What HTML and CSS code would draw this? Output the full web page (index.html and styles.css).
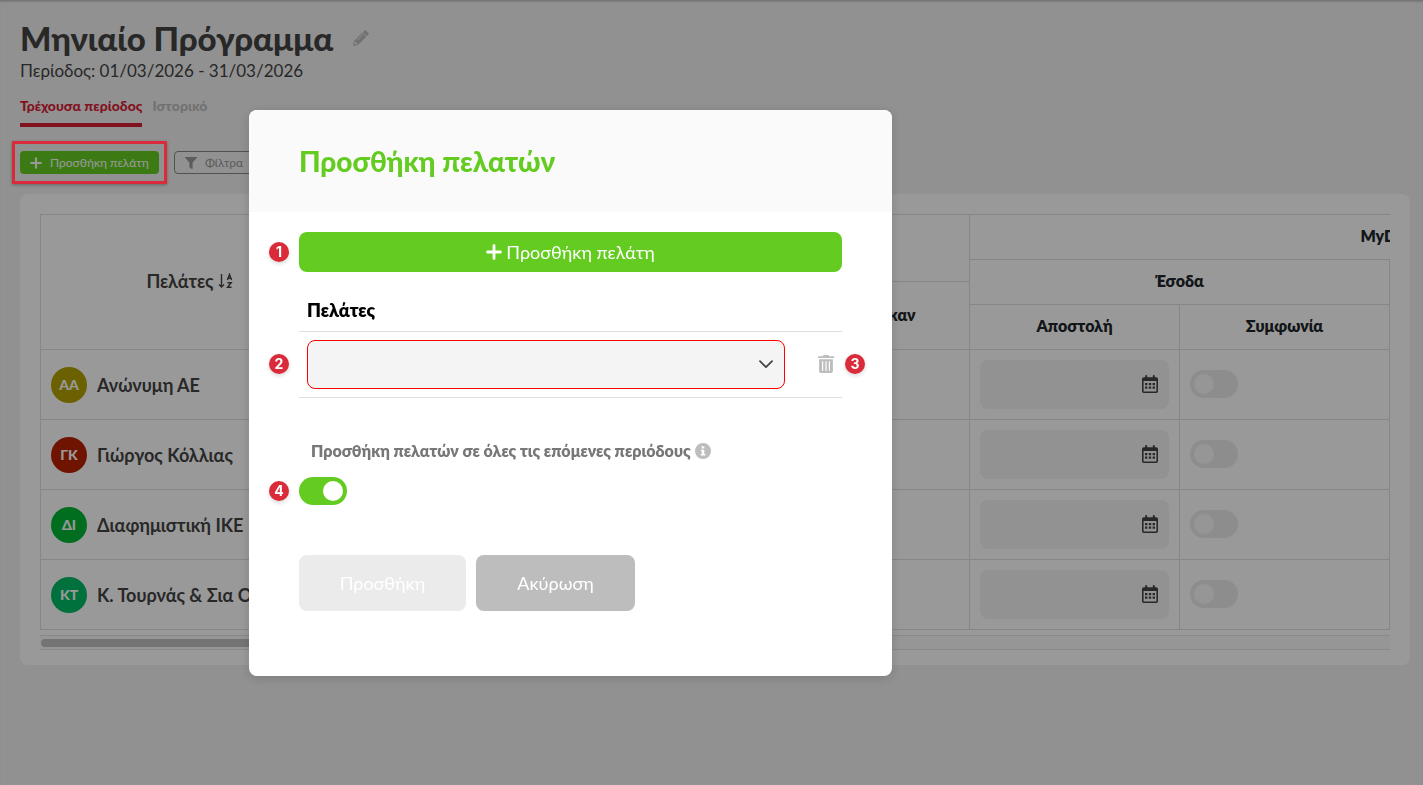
FILE: index.html
```html
<!DOCTYPE html>
<html lang="el">
<head>
<meta charset="utf-8">
<meta name="viewport" content="width=device-width, initial-scale=1">
<title>Μηνιαίο Πρόγραμμα</title>
<link rel="stylesheet" href="styles.css">
</head>
<body>
<svg class="sprite" aria-hidden="true">
  <symbol id="i-plus" viewBox="0 0 16 16"><path d="M6.6 1.2Q6.6.2 8 .2t1.4 1v5.4h5.4q1 0 1 1.4t-1 1.4H9.400v5.400q0 1-1.400 1t-1.400-1V9.400H1.200q-1 0-1-1.400t1-1.400h5.400z"/></symbol>
  <symbol id="i-filter" viewBox="0 0 12 12"><path d="M.6 0h10.800q.9.300.4 1.100L7.600 5.600v5.800q-.1.800-.8.500L4.700 10.400q-.3-.200-.3-.6V5.600L.2 1.100Q-.300.300.6 0z"/></symbol>
  <symbol id="i-pencil" viewBox="0 0 16 16"><path fill-rule="evenodd" d="M11.300.7q.9-.9 1.800 0l2.200 2.200q.9.900 0 1.800l-1.500 1.500-4-4zM9.200 2.800l4 4L5 15l-4 1Q0 16 0 15l1-4zM2 11.800l-.6 2.300.6.600 2.200-.6V13H3v-1.200zM9.300 4.500 4 9.800l.5.500 5.300-5.300z"/></symbol>
  <symbol id="i-sort" viewBox="0 0 16 16"><path d="M3.500 1v13M1 11.500 3.500 14 6 11.500" fill="none" stroke="currentColor" stroke-width="1.400"/><path d="M9.400 7 11.500 1.400 13.600 7M10 5.200h3M9.500 9.700h3.700l-3.700 4.600h4" fill="none" stroke="currentColor" stroke-width="1.400"/></symbol>
  <symbol id="i-calendar" viewBox="0 0 16 18"><path fill-rule="evenodd" d="M3.200 1q0-1 1-1t1 1v1.200h5.600V1q0-1 1-1t1 1v1.200h1.400q1.800 0 1.800 1.800v12.200Q16 18 14.200 18H1.800Q0 18 0 16.200V4q0-1.800 1.800-1.800h1.400zM1.600 6v10q0 .5.500.5h11.800q.5 0 .5-.5V6z"/><path d="M3 8h2.400v2.200H3zM6.800 8h2.400v2.200H6.800zM10.600 8H13v2.200h-2.400zM3 11.600h2.400v2.200H3zM6.800 11.600h2.400v2.200H6.800zM10.600 11.600H13v2.200h-2.400z"/></symbol>
  <symbol id="i-chevron" viewBox="0 0 14 9"><path d="M1 1.200 7 7.200l6-6" fill="none" stroke="currentColor" stroke-width="1.800" stroke-linecap="round" stroke-linejoin="round"/></symbol>
  <symbol id="i-trash" viewBox="0 0 16 18"><path d="M0 1.300h4.600L5.600 0h4.800l1 1.300H16v1.800H0z"/><path fill-rule="evenodd" d="M1.100 4.200h13.800V16.300Q14.900 18 13.200 18H2.800Q1.100 18 1.100 16.300zM4 6.300v9.500h1.200V6.300zm3.400 0v9.500h1.200V6.300zm3.400 0v9.500H12V6.300z"/></symbol>
  <symbol id="i-info" viewBox="0 0 16 16"><path fill-rule="evenodd" d="M8 0a8 8 0 1 0 0 16A8 8 0 0 0 8 0zM6.700 3.300h2.600v2.300H6.700zM5.900 6.700h3.400v4.200h1v1.600H5.700v-1.600h1V8.200h-.8z"/></symbol>
</svg>

<main class="page">
  <header class="page-head">
    <div class="title-row">
      <h1 class="title">Μηνιαίο Πρόγραμμα</h1>
      <button class="icon-btn" type="button" aria-label="Επεξεργασία"><svg class="ic-pencil"><use href="#i-pencil"/></svg></button>
    </div>
    <p class="period">Περίοδος: 01/03/2026 - 31/03/2026</p>
    <nav class="tabs">
      <a class="tab tab-active" href="#current">Τρέχουσα περίοδος</a>
      <a class="tab" href="#history">Ιστορικό</a>
    </nav>
    <div class="toolbar">
      <div class="callout">
        <button class="btn-sm btn-sm-green" type="button"><svg class="ic-sm"><use href="#i-plus"/></svg>Προσθήκη πελάτη</button>
      </div>
      <button class="btn-sm btn-sm-line" type="button"><svg class="ic-sm"><use href="#i-filter"/></svg>Φίλτρα</button>
    </div>
  </header>

  <section class="card">
    <div class="grid-wrap">
      <table class="grid">
        <colgroup><col class="col-client"><col span="7" class="col-data"></colgroup>
        <thead>
          <tr class="r-full">
            <th class="th-client" rowspan="4" scope="col"><span class="sort">Πελάτες <svg class="ic-sort"><use href="#i-sort"/></svg></span></th>
            <th rowspan="2" colspan="3"></th>
            <th colspan="4" scope="colgroup">MyData</th>
          </tr>
          <tr class="r-upper"><th rowspan="2" colspan="2" scope="colgroup">Έσοδα</th><th rowspan="2" colspan="2"></th></tr>
          <tr class="r-lower"><th rowspan="2"></th><th rowspan="2"></th><th rowspan="2" scope="col">Υποβλήθηκαν</th></tr>
          <tr class="r-full"><th scope="col">Αποστολή</th><th scope="col">Συμφωνία</th><th></th><th></th></tr>
        </thead>
        <tbody>
          <tr>
            <td><div class="client"><span class="avatar av-olive">ΑΑ</span>Ανώνυμη ΑΕ</div></td><td></td><td></td><td></td>
            <td><div class="date"><input class="date-input" type="text" aria-label="Αποστολή Ανώνυμη ΑΕ"><svg class="ic-cal"><use href="#i-calendar"/></svg></div></td>
            <td><input class="switch" type="checkbox" aria-label="Συμφωνία Ανώνυμη ΑΕ"></td><td></td><td></td>
          </tr>
          <tr>
            <td><div class="client"><span class="avatar av-red">ΓΚ</span>Γιώργος Κόλλιας</div></td><td></td><td></td><td></td>
            <td><div class="date"><input class="date-input" type="text" aria-label="Αποστολή Γιώργος Κόλλιας"><svg class="ic-cal"><use href="#i-calendar"/></svg></div></td>
            <td><input class="switch" type="checkbox" aria-label="Συμφωνία Γιώργος Κόλλιας"></td><td></td><td></td>
          </tr>
          <tr>
            <td><div class="client"><span class="avatar av-green">ΔΙ</span>Διαφημιστική ΙΚΕ</div></td><td></td><td></td><td></td>
            <td><div class="date"><input class="date-input" type="text" aria-label="Αποστολή Διαφημιστική ΙΚΕ"><svg class="ic-cal"><use href="#i-calendar"/></svg></div></td>
            <td><input class="switch" type="checkbox" aria-label="Συμφωνία Διαφημιστική ΙΚΕ"></td><td></td><td></td>
          </tr>
          <tr>
            <td><div class="client"><span class="avatar av-teal">ΚΤ</span>Κ. Τουρνάς &amp; Σια ΟΕ</div></td><td></td><td></td><td></td>
            <td><div class="date"><input class="date-input" type="text" aria-label="Αποστολή Κ. Τουρνάς"><svg class="ic-cal"><use href="#i-calendar"/></svg></div></td>
            <td><input class="switch" type="checkbox" aria-label="Συμφωνία Κ. Τουρνάς"></td><td></td><td></td>
          </tr>
        </tbody>
      </table>
    </div>
    <div class="scrollbar"><div class="thumb"></div></div>
  </section>
</main>

<div class="overlay">
  <div class="modal" role="dialog" aria-modal="true" aria-labelledby="modal-title">
    <header class="modal-head"><h2 class="modal-title" id="modal-title">Προσθήκη πελατών</h2></header>
    <form class="modal-body">
      <div class="anchor">
        <span class="mark mark-wide">1</span>
        <button class="btn-add" type="button"><svg class="ic-plus"><use href="#i-plus"/></svg>Προσθήκη πελάτη</button>
      </div>
      <table class="picker">
        <thead><tr><th colspan="2" scope="col"><label for="client">Πελάτες</label></th></tr></thead>
        <tbody><tr>
          <td>
            <div class="anchor select-wrap"><span class="mark mark-cell">2</span>
            <select class="select" id="client"><option></option></select><svg class="ic-chevron"><use href="#i-chevron"/></svg></div>
          </td>
          <td class="td-trash"><div class="anchor trash-wrap"><button class="icon-btn" type="button" aria-label="Διαγραφή"><svg class="ic-trash"><use href="#i-trash"/></svg></button><span class="mark mark-right">3</span></div></td>
        </tr></tbody>
      </table>
      <div class="repeat">
        <label class="repeat-label" for="repeat">Προσθήκη πελατών σε όλες τις επόμενες περιόδους <svg class="ic-info"><use href="#i-info"/></svg></label>
        <div class="anchor"><span class="mark mark-wide">4</span><input class="switch" id="repeat" type="checkbox" checked></div>
      </div>
      <div class="actions">
        <button class="btn btn-submit" type="submit" disabled>Προσθήκη</button>
        <button class="btn btn-cancel" type="button">Ακύρωση</button>
      </div>
    </form>
  </div>
</div>
</body>
</html>
```
FILE: styles.css
```css
* { box-sizing: border-box; }

body {
  margin: 0;
  min-height: 100vh;
  overflow: hidden;
  background: #f2f2f2;
  color: #444;
  font-family: Lato, "Noto Sans", sans-serif;
  font-size: 18px;
  line-height: 24px;
}

button, input, select { font: inherit; color: inherit; }
button { margin: 0; border: 0; cursor: pointer; }
svg { display: block; fill: currentColor; flex: none; }
.sprite { position: absolute; width: 0; height: 0; }

.page {
  min-height: 100vh;
  padding: 19px 13px 20px 20px;
  box-shadow: inset 0 3px 3px -2px rgba(0, 0, 0, .3);
}

.title-row { display: flex; align-items: center; gap: 20px; height: 38px; }
.title { margin: 0; font-size: 33px; line-height: 38px; font-weight: 900; }
.icon-btn { padding: 0; background: none; color: #bdbdbd; }
.ic-pencil { width: 16px; height: 16px; }
.period { margin: 2px 0 0; font-size: 17px; }

.tabs { display: flex; gap: 10px; margin-top: 13px; }
.tab {
  padding-bottom: 7px;
  border-bottom: 4px solid transparent;
  color: #bdbdbd;
  font-size: 14px;
  line-height: 20px;
  font-weight: 900;
  text-decoration: none;
}
.tab-active { color: #d91e36; border-color: #d91e36; }

.toolbar { display: flex; gap: 15px; margin-top: 24px; }
.callout { position: relative; }
.callout::after {
  content: "";
  position: absolute;
  inset: -10px -8px;
  z-index: 20;
  border: 3px solid #d92b3a;
  box-shadow: 0 1px 3px rgba(0, 0, 0, .3);
  pointer-events: none;
}
.btn-sm {
  display: flex;
  align-items: center;
  gap: 8px;
  height: 23px;
  padding: 0 10px;
  border-radius: 4px;
  font-size: 12px;
  line-height: 20px;
}
.btn-sm-green { background: #64cc21; color: #fff; }
.btn-sm-line { border: 1px solid #888; background: none; color: #999; }
.ic-sm { width: 12px; height: 12px; }

.card {
  margin-top: 20px;
  padding: 20px 20px 15px;
  border-radius: 8px;
  background: #fff;
}
.grid-wrap { overflow: hidden; }
.grid {
  width: 1770px;
  table-layout: fixed;
  border-spacing: 0;
  border: solid #dfdfdf;
  border-width: 1px 0 0 1px;
}
.col-client { width: 299px; }
.col-data { width: 210px; }
.grid th, .grid td { padding: 0 10px; border: solid #dfdfdf; border-width: 0 1px 1px 0; }
.grid th { padding-bottom: 2px; color: #212529; font-size: 16px; font-weight: 800; line-height: 20px; }
.grid .th-client { color: #444; font-size: 18px; font-weight: 700; }
.grid td { height: 70px; }
.r-full { height: 45px; }
.r-upper { height: 22px; }
.r-lower { height: 23px; }
.sort { display: inline-flex; align-items: center; gap: 4px; }
.ic-sort { width: 16px; height: 16px; }

.client { display: flex; align-items: center; gap: 10px; font-weight: 700; white-space: nowrap; }
.avatar {
  display: grid;
  place-items: center;
  width: 36px;
  height: 36px;
  border-radius: 50%;
  color: #fff;
  font-size: 14px;
  font-weight: 900;
}
.av-olive { background: #b2a200; }
.av-red { background: #b92200; }
.av-green { background: #00b732; }
.av-teal { background: #00bb64; }

.date { position: relative; }
.date-input {
  display: block;
  width: 100%;
  height: 49px;
  padding: 0 40px 0 12px;
  border: 0;
  border-radius: 8px;
  background: #f4f4f4;
}
.ic-cal { position: absolute; right: 11px; top: 15px; width: 16px; height: 18px; }

.switch {
  appearance: none;
  display: block;
  width: 48px;
  height: 28px;
  margin: 0;
  padding: 4px;
  border-radius: 14px;
  background: #ececec;
}
.grid .switch { margin-bottom: 1px; }
.switch::before {
  content: "";
  display: block;
  width: 20px;
  height: 20px;
  border-radius: 50%;
  background: #fafafa;
}
.switch:checked { background: #64cc21; }
.switch:checked::before { margin-left: auto; background: #fff; }

.scrollbar {
  height: 15px;
  margin-top: 5px;
  padding: 3px 1px;
  border: solid #e4e4e4;
  border-width: 1px 0;
  background: #fafafa;
}
.thumb { width: 46%; height: 8px; border-radius: 4px; background: #c1c1c1; }

.overlay {
  position: fixed;
  inset: 0;
  z-index: 10;
  display: flex;
  align-items: center;
  padding-left: 249px;
  background: rgba(0, 0, 0, .4);
}
.modal {
  width: 643px;
  border-radius: 8px;
  background: #fff;
  color: #000;
  box-shadow: 0 2px 12px rgba(0, 0, 0, .15);
}
.modal-head { padding: 34px 50px; border-radius: 8px 8px 0 0; background: #fafafa; }
.modal-title { margin: 0; color: #64cc21; font-size: 28px; line-height: 34px; font-weight: 900; }
.modal-body { padding: 20px 50px 65px; }
.anchor { position: relative; }

.btn-add {
  display: flex;
  align-items: center;
  justify-content: center;
  gap: 4px;
  width: 100%;
  height: 40px;
  border-radius: 8px;
  background: #64cc21;
  color: #fff;
}
.ic-plus { width: 16px; height: 16px; }

.picker { width: 100%; margin-top: 20px; border-spacing: 0; }
.picker th, .picker td { padding: 8px; border-bottom: 1px solid #dfdfdf; }
.picker th { padding: 6px 8px 9px; font-weight: 800; text-align: left; }
.select {
  appearance: none;
  display: block;
  width: 100%;
  height: 49px;
  padding: 0 40px 0 12px;
  border: 1px solid #f00;
  border-radius: 8px;
  background: #f4f4f4;
}
.ic-chevron { position: absolute; right: 12px; top: 20px; width: 14px; height: 9px; color: #444; pointer-events: none; }
.picker .td-trash { width: 49px; }
.trash-wrap { display: flex; justify-content: flex-end; }
.ic-trash { width: 16px; height: 18px; }

.repeat { margin-top: 41px; }
.repeat-label {
  display: flex;
  align-items: center;
  gap: 4px;
  margin-bottom: 14px;
  padding-left: 12px;
  color: #777;
  font-size: 16px;
  font-weight: 800;
}
.ic-info { width: 16px; height: 16px; color: #bdbdbd; }

.actions { display: flex; gap: 10px; margin-top: 50px; }
.btn { height: 56px; padding: 0 40px; border-radius: 8px; color: #fff; }
.btn-submit { min-width: 167px; background: #ebebeb; }
.btn-cancel { min-width: 159px; background: #bdbdbd; }

.mark {
  position: absolute;
  top: 50%;
  display: grid;
  place-items: center;
  width: 20px;
  height: 20px;
  margin-top: -10px;
  border-radius: 50%;
  background: #d92b3a;
  color: #fff;
  font: 700 14px/20px Inter, sans-serif;
  box-shadow: 0 2px 4px rgba(0, 0, 0, .15);
}
.mark-wide { left: -30px; }
.mark-cell { left: -38px; }
.mark-right { right: -31px; }
```
